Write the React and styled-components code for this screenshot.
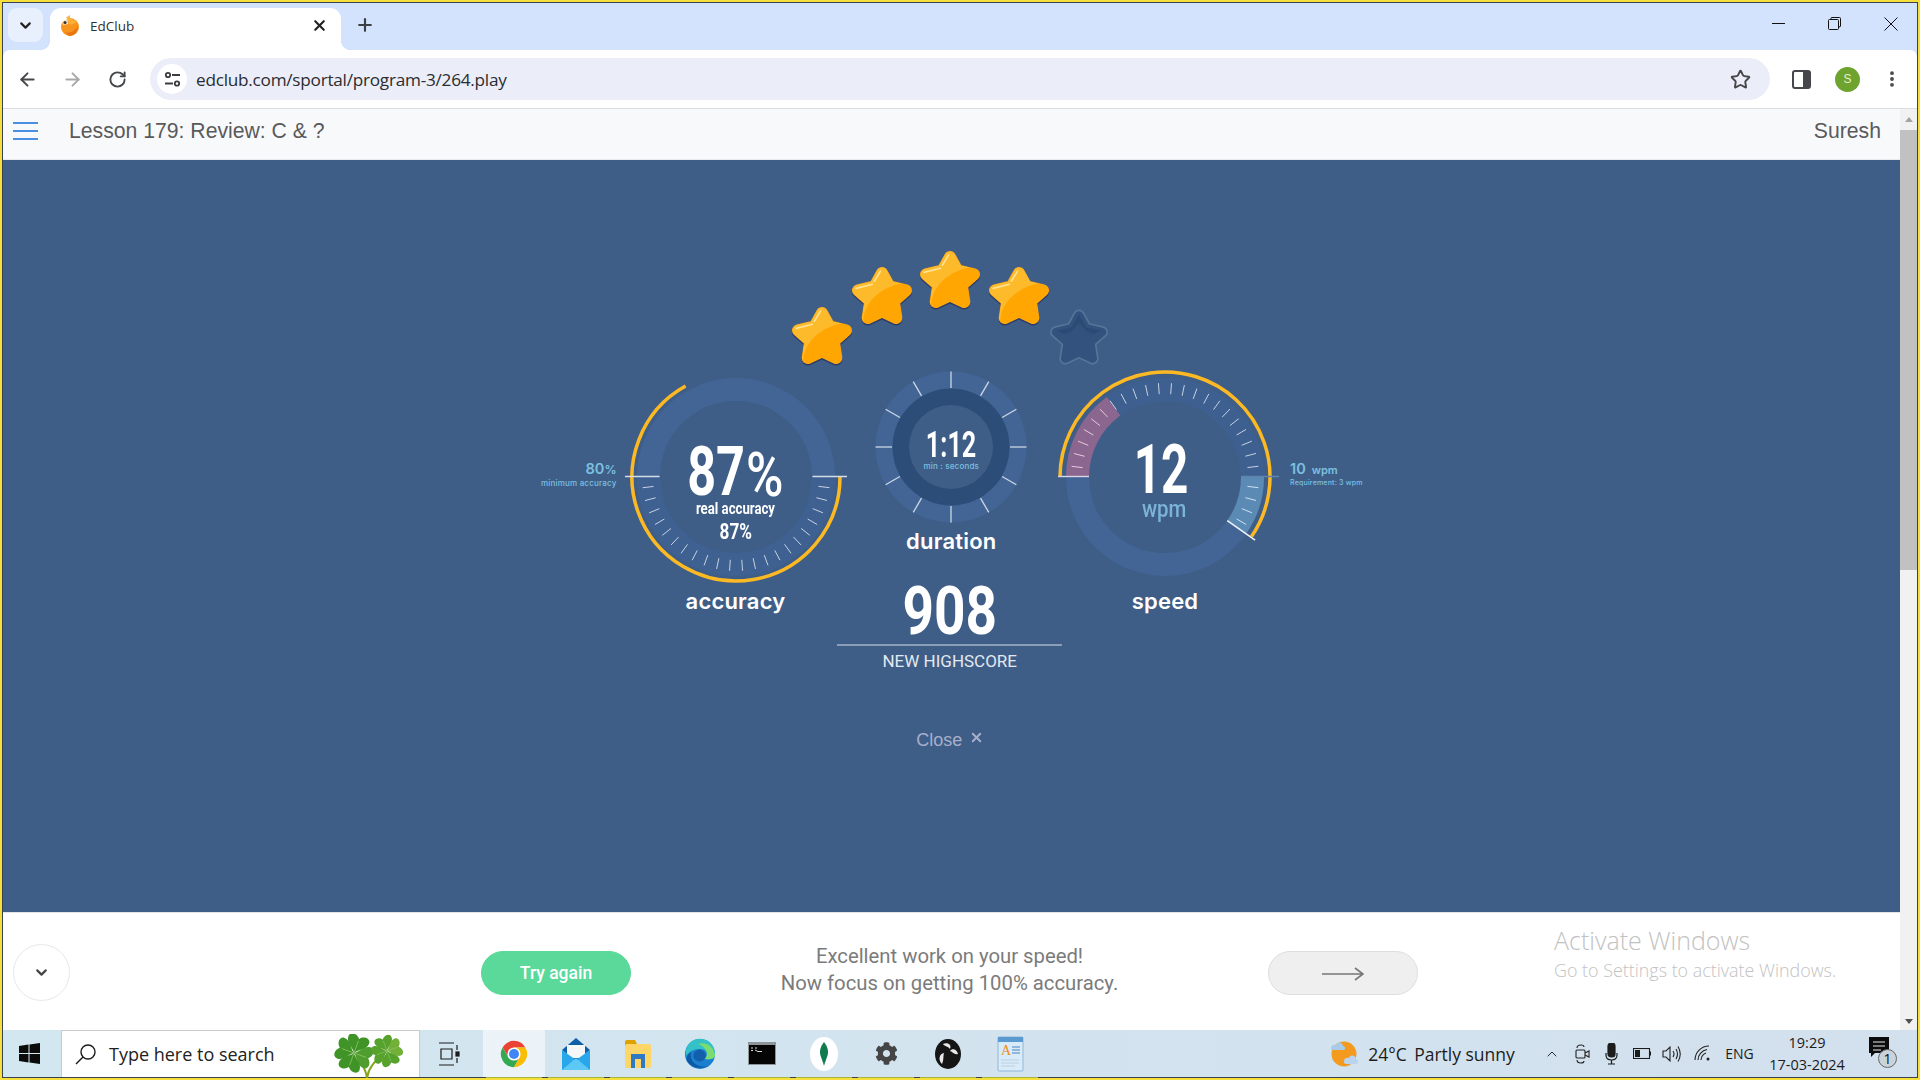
import React, { useId } from 'react';
import styled, { createGlobalStyle } from 'styled-components';
import { ArrowLeft, ArrowRight, RotateCw, Star as StarIcon, X, Plus, ChevronDown, ChevronUp, EllipsisVertical } from 'lucide-react';
import { FaCog } from 'react-icons/fa';

const GlobalStyle = createGlobalStyle`
  html, body { margin: 0; padding: 0; overflow: hidden; background: #fff; }
  * { box-sizing: border-box; }
`;

const BLUE = '#3e5e87';
const BAND = '#426596';
const SKY = '#7cc0e0';
const GOLD = '#fdb924';
const SANS = '"Liberation Sans", Arial, sans-serif';
const UI = '"Open Sans", "Noto Sans", sans-serif';
const NUM = 'Roboto, "Liberation Sans", sans-serif';
const LABEL = 'Inter, "Noto Sans", sans-serif';

/* window chrome */
const Frame = styled.div`
  width: 1920px;
  height: 1080px;
  border: 2px solid #f6df3a;
  overflow: hidden;
`;
const Inner = styled.div`
  height: 100%;
  border: 1px solid #39424e;
  display: flex;
  flex-direction: column;
`;
const TabStrip = styled.div`
  height: 47px;
  flex: none;
  background: #d3e3fd;
  display: flex;
  align-items: flex-end;
  padding-left: 5px;
`;
const TabSearch = styled.div`
  width: 35px;
  height: 34px;
  margin-bottom: 8px;
  border-radius: 9px;
  background: #e9f0fd;
  color: #222;
  display: flex;
  align-items: center;
  justify-content: center;
`;
const Tab = styled.div`
  position: relative;
  width: 291px;
  height: 42px;
  margin-left: 7px;
  border-radius: 11px 11px 0 0;
  background: #fff;
  display: flex;
  align-items: center;
  padding: 0 13px 7px 10px;
  color: #2f3033;
  font: 13.5px ${UI};
  &::before, &::after {
    content: '';
    position: absolute;
    bottom: 0;
    width: 10px;
    height: 10px;
  }
  &::before { left: -10px; background: radial-gradient(circle at 0 0, transparent 10px, #fff 10.5px); }
  &::after { right: -10px; background: radial-gradient(circle at 100% 0, transparent 10px, #fff 10.5px); }
`;
const TabTitle = styled.span`
  flex: 1;
  margin-left: 10px;
`;
const NewTab = styled.div`
  margin: 0 0 8px 14px;
  height: 34px;
  display: flex;
  align-items: center;
  color: #3c3f43;
`;
const WindowControls = styled.div`
  margin-left: auto;
  height: 100%;
  display: flex;
  align-items: center;
  padding: 0 19px 6px 0;
  gap: 43px;
`;
const Toolbar = styled.div`
  height: 59px;
  flex: none;
  background: #d3e3fd;
`;
const ToolbarInner = styled.div`
  height: 100%;
  background: #fff;
  border-bottom: 1px solid #dadce0;
  border-top-right-radius: 7px;
  border-top-left-radius: 7px;
  display: flex;
  align-items: center;
  color: #45474a;
`;
const NavSlot = styled.div`
  width: ${p => p.$w}px;
  flex: none;
  display: flex;
  justify-content: center;
  color: ${p => (p.$dim ? '#a8a9ab' : '#45474a')};
  padding-left: ${p => p.$pad || 0}px;
  padding-right: ${p => p.$padRight || 0}px;
`;
const AddressBar = styled.div`
  flex: 1;
  height: 42px;
  margin-left: 9px;
  border-radius: 21px;
  background: #ebeef8;
  display: flex;
  align-items: center;
  padding: 0 19px 0 7px;
`;
const SiteInfo = styled.div`
  width: 30px;
  height: 30px;
  border-radius: 50%;
  background: #fff;
  display: flex;
  align-items: center;
  justify-content: center;
`;
const Url = styled.span`
  flex: 1;
  margin-left: 9px;
  font: 17.2px ${UI};
  letter-spacing: -0.25px;
  color: #2a2c30;
`;
const Avatar = styled.div`
  width: 25px;
  height: 25px;
  margin-left: -1px;
  border-radius: 50%;
  background: #6ea32d;
  color: #e4efd2;
  font: 12px ${SANS};
  display: flex;
  align-items: center;
  justify-content: center;
`;

/* page */
const Viewport = styled.div`
  flex: 1;
  min-height: 0;
  display: flex;
`;
const Page = styled.div`
  flex: 1;
  min-width: 0;
  display: flex;
  flex-direction: column;
`;
const Scrollbar = styled.div`
  width: 17px;
  flex: none;
  background: #f1f1f1;
  display: flex;
  flex-direction: column;
  align-items: center;
`;
const ScrollArrow = styled.div`
  width: 0;
  height: 0;
  flex: none;
  border-left: 4.5px solid transparent;
  border-right: 4.5px solid transparent;
  ${p => (p.$down ? 'border-top: 5px solid #505050; margin: auto 0 6px;' : 'border-bottom: 5px solid #a3a3a3; margin: 8px 0;')}
`;
const ScrollThumb = styled.div`
  width: 100%;
  height: 440px;
  background: #c1c1c1;
`;
const LessonBar = styled.header`
  height: 51px;
  flex: none;
  background: #f8f9fb;
  display: flex;
  align-items: center;
  padding: 0 19px 6px 10px;
  color: #5a5a5c;
  font: 21.2px ${SANS};
  border-bottom: 1px solid #e8e9ec;
`;
const Burger = styled.div`
  width: 25px;
  height: 18px;
  margin-right: 31px;
  border-top: 2.5px solid #4a90e2;
  border-bottom: 2.5px solid #4a90e2;
  display: flex;
  align-items: center;
  &::before { content: ''; width: 100%; height: 2.5px; background: #4a90e2; }
`;
const LessonTitle = styled.span`
  flex: 1;
`;
const Stage = styled.main`
  flex: 1;
  background: ${BLUE};
  display: flex;
  flex-direction: column;
  align-items: center;
  padding-top: 91px;
`;
const StarRow = styled.div`
  display: flex;
  height: 113px;
  margin-right: 4px;
`;
const StarBox = styled.svg`
  margin-left: ${p => p.$gap}px;
  margin-top: ${p => p.$drop}px;
  overflow: visible;
  flex: none;
`;
const Dials = styled.div`
  display: grid;
  grid-template-columns: 88px 220px 211.5px 216px 92.5px;
  margin-top: 3px;
`;
const DialColumn = styled.div`
  display: flex;
  flex-direction: column;
  align-items: center;
`;
const DialBox = styled.div`
  position: relative;
  width: ${p => p.$size}px;
  height: ${p => p.$size}px;
  margin-top: ${p => p.$top || 0}px;
  flex: none;
  & > svg { display: block; overflow: visible; }
`;
const Readout = styled.div`
  position: absolute;
  inset: 0;
  display: flex;
  flex-direction: column;
  align-items: center;
  padding-top: ${p => p.$top}px;
  color: #fff;
`;
const PercentRow = styled.div`
  display: flex;
  gap: 4px;
`;
const SqueezeBox = styled.div`
  width: ${p => p.$w}px;
  height: ${p => p.$lh}px;
  margin-top: ${p => p.$top || 0}px;
  margin-left: ${p => p.$left || 0}px;
  display: flex;
  justify-content: center;
  white-space: nowrap;
  font: ${p => p.$weight || 700} ${p => p.$size}px/${p => p.$lh}px ${NUM};
  color: ${p => p.$color || '#fff'};
  & > span { display: block; flex: none; transform: scaleX(${p => p.$sx}); }
`;
const Squeeze = ({ children, ...props }) => (
  <SqueezeBox {...props}><span>{children}</span></SqueezeBox>
);
const TinyNote = styled.div`
  font: 500 ${p => p.$size || 8}px/10px ${LABEL};
  letter-spacing: 0.2px;
  color: ${SKY};
  white-space: nowrap;
  margin-top: ${p => p.$top || 0}px;
`;
const DialLabel = styled.div`
  font: 600 22px/26px ${LABEL};
  letter-spacing: 0.2px;
  color: #fff;
  margin-top: ${p => p.$top || 0}px;
`;
const SideNote = styled.div`
  display: flex;
  flex-direction: column;
  align-items: ${p => (p.$right ? 'flex-start' : 'flex-end')};
  padding: 94px ${p => (p.$right ? 0 : 9)}px 0 ${p => (p.$right ? 17 : 0)}px;
  white-space: nowrap;
`;
const SideValue = styled.div`
  font: 600 14.5px/15px ${LABEL};
  color: ${SKY};
  display: flex;
  align-items: baseline;
  gap: ${p => p.$gap || 0}px;
`;
const SideUnit = styled.span`
  font-size: ${p => p.$size}px;
`;
const Score = styled.div`
  width: 225px;
  flex: none;
  margin: 25px 3px 0 0;
  display: flex;
  flex-direction: column;
  align-items: center;
  color: #fff;
`;
const ScoreRule = styled.div`
  width: 100%;
  height: 2px;
  background: rgba(255, 255, 255, 0.4);
`;
const ScoreCaption = styled.div`
  margin-top: 5px;
  font: 17px/20px ${NUM};
  color: #e3e9f1;
`;
const CloseLink = styled.div`
  margin: 59px 2px 0 0;
  display: flex;
  color: #a7afca;
  font: 18px/20px ${SANS};
  gap: 7px;
`;

/* lesson footer */
const Footer = styled.footer`
  position: relative;
  height: 118px;
  flex: none;
  background: #fff;
  display: flex;
  align-items: center;
  padding: 2px 0 0 10px;
  border-top: 1px solid #e2e4e8;
`;
const CollapseButton = styled.div`
  width: 57px;
  height: 57px;
  border-radius: 50%;
  border: 1px solid #e8e8e8;
  display: flex;
  align-items: center;
  justify-content: center;
  color: #444;
  margin-right: 411px;
`;
const PillButton = styled.div`
  width: 150px;
  height: 44px;
  border-radius: 22px;
  flex: none;
  background: ${p => (p.$ghost ? '#efefef' : '#5bd99a')};
  border: 1px solid ${p => (p.$ghost ? '#dedede' : '#5bd99a')};
  color: #fff;
  display: flex;
  align-items: center;
  justify-content: center;
  padding-top: ${p => (p.$ghost ? 3 : 0)}px;
  font: 500 17.5px ${NUM};
`;
const Message = styled.div`
  width: 637px;
  flex: none;
  margin-top: -5px;
  text-align: center;
  color: #7b7b7b;
  font: 20.3px/27px ${NUM};
`;
const Watermark = styled.div`
  position: absolute;
  left: 1551px;
  top: 9px;
  color: #c2c2c2;
  font: 300 17.9px/24px ${UI};
`;
const WatermarkTitle = styled.div`
  font-size: 25px;
  line-height: 36px;
`;

/* taskbar */
const Taskbar = styled.div`
  height: 47px;
  flex: none;
  background: linear-gradient(90deg, #d2e7f0, #d3e0ee);
  display: flex;
  align-items: center;
`;
const StartButton = styled.div`
  width: 58px;
  height: 100%;
  display: flex;
  align-items: center;
  justify-content: center;
  padding-right: 6px;
`;
const SearchBox = styled.div`
  position: relative;
  width: 359px;
  height: 100%;
  background: #fff;
  border: 1px solid #c9cccf;
  border-bottom: 0;
  display: flex;
  align-items: center;
  padding-left: 13px;
  color: #222;
  font: 18px ${UI};
  gap: 13px;
`;
const Clover = styled.svg`
  position: absolute;
  left: 268px;
  top: 3px;
`;
const TaskSlot = styled.div`
  position: relative;
  width: ${p => p.$w || 62}px;
  height: 100%;
  flex: none;
  display: flex;
  align-items: center;
  justify-content: center;
  padding-right: ${p => p.$padRight || 0}px;
  background: ${p => (p.$active ? 'rgba(255, 255, 255, 0.55)' : 'transparent')};
  ${p => p.$open && `
    &::after {
      content: '';
      position: absolute;
      left: 3px;
      right: 3px;
      bottom: -3px;
      height: 3px;
      background: #a7b53a;
    }
  `}
`;
const Tray = styled.div`
  margin-left: auto;
  height: 100%;
  display: flex;
  align-items: center;
  padding-right: 20px;
  color: #1c1c1c;
  font: 17.5px ${UI};
  white-space: nowrap;
`;
const TrayItem = styled.div`
  width: ${p => p.$w}px;
  margin-left: ${p => p.$ml || 0}px;
  flex: none;
  display: flex;
  align-items: center;
  justify-content: center;
  font-size: ${p => p.$size || 17.5}px;
`;
const Clock = styled.div`
  width: 78px;
  margin-left: 15px;
  flex: none;
  text-align: center;
  font: 14.5px/22px ${UI};
`;
const NoteBadge = styled.div`
  position: absolute;
  left: 9px;
  top: 12px;
  width: 19px;
  height: 19px;
  border-radius: 50%;
  border: 1px solid #666;
  background: #c9d3da;
  color: #111;
  font: 14px/17px ${UI};
  text-align: center;
`;
const NoteIcon = styled.div`
  position: relative;
  width: 28px;
  height: 34px;
  margin-left: 23px;
  flex: none;
`;

const STAR_PATH = 'M29.5 6 L36.7 19 L53 23 L41 33.5 L43.5 50 L29.5 43.5 L15.5 50 L18 33.5 L6 23 L22.3 19 Z';

const Star = ({ lit, gap, drop }) => {
  const id = useId();
  if (!lit) {
    return (
      <StarBox width="58" height="56" viewBox="0 0 59 56" $gap={gap} $drop={drop}>
        <path d={STAR_PATH} fill="#587399" stroke="#587399" strokeWidth="12" strokeLinejoin="round" />
        <path d={STAR_PATH} fill="#33527e" stroke="#33527e" strokeWidth="8.5" strokeLinejoin="round" />
        <path d="M7 22 L22 18 L29.5 5 L37 18 L52 22 L44 25 L37 22 L29.5 14 L22 22 L15 25 Z" fill="#2b4870" opacity="0.75" />
      </StarBox>
    );
  }
  return (
    <StarBox width="60" height="57" viewBox="0 0 59 56" $gap={gap} $drop={drop}>
      <defs>
        <mask id={id}>
          <path d={STAR_PATH} fill="#fff" stroke="#fff" strokeWidth="11" strokeLinejoin="round" />
        </mask>
      </defs>
      <path d={STAR_PATH} transform="translate(0 1.6)" fill="#2c3c66" stroke="#2c3c66" strokeWidth="12" strokeLinejoin="round" />
      <path d={STAR_PATH} fill="#f8a51b" stroke="#f8a51b" strokeWidth="12" strokeLinejoin="round" />
      <g mask={`url(#${id})`}>
        <rect x="0" y="0" width="60" height="56" fill="#fdbb2c" />
        <ellipse cx="60" cy="54" rx="49" ry="39" fill="#ffa602" />
        <path d="M22 14 L28 4 M4 21 L20 17" stroke="#ffe394" strokeWidth="1.6" strokeLinecap="round" />
      </g>
    </StarBox>
  );
};

const polar = (c, r, deg) => {
  const a = (deg * Math.PI) / 180;
  return [c + r * Math.cos(a), c + r * Math.sin(a)];
};
const arc = (c, r, from, to) => {
  const [x0, y0] = polar(c, r, from);
  const [x1, y1] = polar(c, r, to);
  return `M${x0} ${y0} A${r} ${r} 0 ${to - from > 180 ? 1 : 0} 1 ${x1} ${y1}`;
};
const Tick = ({ c, deg, r0, r1, color = '#dfe6f0', width = 1 }) => {
  const [x0, y0] = polar(c, r0, deg);
  const [x1, y1] = polar(c, r1, deg);
  return <line x1={x0} y1={y0} x2={x1} y2={y1} stroke={color} strokeWidth={width} />;
};
const TICKS = Array.from({ length: 22 }, (_, i) => 6.5 + 7.95 * i);

const AccuracyDial = () => (
  <svg width="220" height="220" viewBox="0 0 220 220">
    <circle cx="110" cy="110" r="87.5" fill="none" stroke={BAND} strokeWidth="23" />
    <path d={arc(110, 87.5, 0, 180)} fill="none" stroke="#3f6191" strokeWidth="23" />
    {TICKS.map(d => <Tick key={d} c={110} deg={d} r0={83} r1={94} color="#c7d2e2" />)}
    <path d={arc(110, 104, 0, 241)} fill="none" stroke={GOLD} strokeWidth="3.5" />
    <line x1="-1" y1="109.5" x2="33.5" y2="109.5" stroke="#d5dde8" strokeWidth="1.4" />
    <line x1="186.5" y1="109.5" x2="221" y2="109.5" stroke="#d5dde8" strokeWidth="1.4" />
  </svg>
);

const DurationDial = () => (
  <svg width="152" height="152" viewBox="0 0 152 152">
    <circle cx="76" cy="76" r="75.5" fill={BAND} />
    <circle cx="76" cy="76" r="58.5" fill="#2c4d77" />
    <circle cx="76" cy="76" r="42" fill={BLUE} />
    {Array.from({ length: 12 }, (_, i) => i * 30).map(d => (
      <Tick key={d} c={76} deg={d} r0={59} r1={75.5} color="#cdd7e4" width={1.3} />
    ))}
  </svg>
);

const SpeedDial = () => (
  <svg width="216" height="216" viewBox="0 0 216 216">
    <g transform="translate(0 2)">
      <circle cx="108" cy="108" r="87.5" fill="none" stroke={BAND} strokeWidth="23" />
      <path d={arc(108, 87.5, 180, 360)} fill="none" stroke="#3e6090" strokeWidth="23" />
      <path d={arc(108, 87.5, 180, 234)} fill="none" stroke="#8b6790" strokeWidth="23" />
      <path d={arc(108, 87.5, 0, 35)} fill="none" stroke="#5b8bb5" strokeWidth="23" />
      {TICKS.map(d => (
        <Tick key={d} c={108} deg={180 + d} r0={83} r1={94} color={d < 54 ? '#e8c9df' : '#c7d2e2'} />
      ))}
      {TICKS.slice(0, 4).map(d => <Tick key={d} c={108} deg={d} r0={83} r1={94} color="#cfe0ee" />)}
      <path d={arc(108, 105, 180, 394.6)} fill="none" stroke={GOLD} strokeWidth="3.5" />
      <line x1="1" y1="107.5" x2="32" y2="107.5" stroke="#dcd6e4" strokeWidth="1.4" />
      <line x1="184" y1="107.5" x2="222" y2="107.5" stroke="#5d84ad" strokeWidth="1.4" />
      <Tick c={108} deg={35} r0={76} r1={110} color="#f2f5f9" width={1.5} />
    </g>
  </svg>
);

const Favicon = () => (
  <svg width="20" height="22" viewBox="0 0 20 22">
    <circle cx="10" cy="12" r="9" fill="#f7941d" />
    <path d="M6 3 C8 1 9 1 10 0 C9 4 13 5 17 6 C15 9 11 10 9 9 Z" fill="#fbb03b" />
    <path d="M2 5 L7 3 L8 9 L3 10 Z" fill="#fff" opacity="0.75" />
    <circle cx="5" cy="7.5" r="1.6" fill="#333" />
    <path d="M5 17 C10 19 15 16 18 11 C18 17 14 21 9 21 Z" fill="#e87311" />
  </svg>
);

const ChromeLogo = () => (
  <svg width="30" height="30" viewBox="0 0 48 48">
    <path d="M24 3 A21 21 0 0 1 42.2 13.5 L24 13.5 Z" fill="#ea4335" />
    <path d="M24 3 A21 21 0 0 0 5.8 13.5 L14.5 28.5 L24 13.5 Z" fill="#ea4335" />
    <path d="M5.8 13.5 A21 21 0 0 0 24 45 L33 29 L14.9 29 Z" fill="#34a853" />
    <path d="M42.2 13.5 A21 21 0 0 1 24 45 L33.5 28 L24 13.5 Z" fill="#fbbc04" />
    <circle cx="24" cy="24" r="10.5" fill="#fff" />
    <circle cx="24" cy="24" r="8" fill="#4285f4" />
  </svg>
);

const MailIcon = () => (
  <svg width="30" height="34" viewBox="0 0 30 34">
    <path d="M1 13 L15 1 L29 13 L15 24 Z" fill="#0f5fa8" />
    <rect x="6" y="8" width="18" height="13" fill="#f4f6f8" />
    <path d="M1 13 L15 23 L29 13 V33 H1 Z" fill="#28a8ea" />
    <path d="M1 33 L15 21 L29 33 Z" fill="#5cc8f5" />
  </svg>
);

const FolderIcon = () => (
  <svg width="28" height="30" viewBox="0 0 28 30">
    <path d="M1 3 Q1 1 3 1 H11 L13 5 V8 H1 Z" fill="#e0a100" />
    <rect x="1" y="5" width="26" height="24" rx="2" fill="#fdd667" />
    <path d="M7 15 H21 V29 H17 V20 H11 V29 H7 Z" fill="#2f78c4" />
  </svg>
);

const EdgeIcon = () => (
  <svg width="32" height="32" viewBox="0 0 32 32">
    <circle cx="16" cy="16" r="15" fill="#1b7fd0" />
    <path d="M2 12 C4 3 12 0 18 1 C27 2 31 9 31 17 C31 21 26 22 21 21 C25 17 23 11 16 11 C9 11 5 14 2 18 Z" fill="#35c1c8" />
    <path d="M14 6 C22 3 30 9 31 17 C31 21 26 22 21 21 C25 17 23 9 14 6 Z" fill="#7bdc6f" />
    <path d="M7 14 C5 22 12 31 24 28 C18 31 8 31 3 23 C2 19 4 16 7 14 Z" fill="#0c59a4" />
    <circle cx="15.5" cy="17.5" r="6" fill="#0e4e96" opacity="0.65" />
  </svg>
);

const TerminalIcon = () => (
  <svg width="28" height="23" viewBox="0 0 28 23">
    <rect width="28" height="23" fill="#8f9498" />
    <rect x="1" y="3" width="26" height="19" fill="#050505" />
    <path d="M3 6 H5 M7 6 H9 M3 8.5 H5 M7 8 L10 9.5 H14" stroke="#d9d9d9" strokeWidth="1" />
  </svg>
);

const MongoIcon = () => (
  <svg width="28" height="34" viewBox="0 0 28 34">
    <ellipse cx="14" cy="17" rx="14" ry="17" fill="#fff" />
    <path d="M14 5 C18 10 19 15 17 20 C16 23 15 25 14 29 C13 25 12 23 11 20 C9 15 10 10 14 5 Z" fill="#0f7a4d" />
  </svg>
);

const ObsIcon = () => (
  <svg width="26" height="30" viewBox="0 0 26 30">
    <ellipse cx="13" cy="15" rx="13" ry="15" fill="#151515" />
    <path d="M8 5 C12 3 17 5 15 10 C13 7 9 7 8 5 Z M23 15 C22 10 17 9 15 12 C18 13 19 16 23 15 Z M7 25 C3 21 4 15 9 14 C8 17 9 21 7 25 Z" fill="#e9e9e9" />
  </svg>
);

const WordPadIcon = () => (
  <svg width="27" height="36" viewBox="0 0 27 36">
    <rect x="1" y="1" width="25" height="34" rx="1" fill="#d9ebf8" stroke="#8fb7d8" />
    <rect x="1" y="1" width="25" height="5" fill="#5b9ad0" />
    <text x="4" y="19" fontSize="14" fontFamily="Liberation Serif, serif" fill="#f08a1d">A</text>
    <path d="M15 11 H23 M15 14 H23 M15 17 H23" stroke="#4b86c0" strokeWidth="1.2" />
    <path d="M4 24 H22 M4 27 H22 M4 30 H18" stroke="#b8cfe3" strokeWidth="1" />
  </svg>
);

const Leaf = ({ turn, fill }) => (
  <g transform={`rotate(${turn})`}>
    <path d="M0 0 C-3 -5 -11 -7 -11 -14 C-11 -19 -4 -20 0 -15 C4 -20 11 -19 11 -14 C11 -7 3 -5 0 0 Z" fill={fill} />
    <path d="M0 -1 V-13" stroke="#8fc860" strokeWidth="0.7" />
  </g>
);

const CloverArt = () => (
  <Clover width="78" height="44" viewBox="0 0 78 44">
    <path d="M37 44 C36 36 33 30 26 22 M37 44 C38 36 42 28 56 18" stroke="#86a51f" strokeWidth="2" fill="none" />
    <g transform="translate(24 19)">
      {[20, 110, 200, 290].map((t, i) => <Leaf key={t} turn={t} fill={i === 1 ? '#4f9d2e' : '#3f9327'} />)}
    </g>
    <g transform="translate(57 17) scale(0.82)">
      {[-20, 70, 160, 250].map((t, i) => <Leaf key={t} turn={t} fill={i === 1 ? '#72b038' : '#56a22d'} />)}
    </g>
  </Clover>
);

const WeatherIcon = () => (
  <svg width="29" height="27" viewBox="0 0 29 27">
    <circle cx="14" cy="14" r="12.5" fill="#f39a1f" />
    <path d="M1 8 C1 5 4 4 6 5 C7 1 13 2 13 6 C15 6 16 9 14 10 H3 C1 10 1 9 1 8 Z" fill="#a9cbe8" />
    <path d="M14 21 C14 18 17 17 19 18 C20 14 26 15 26 19 C28 19 29 22 27 24 H16 C14 24 14 22 14 21 Z" fill="#b9d4ec" />
  </svg>
);

const App = () => (
  <>
    <GlobalStyle />
    <Frame>
      <Inner>
        <TabStrip>
          <TabSearch><ChevronDown size={17} strokeWidth={3} /></TabSearch>
          <Tab>
            <Favicon />
            <TabTitle>EdClub</TabTitle>
            <X size={17} strokeWidth={3} color="#222" />
          </Tab>
          <NewTab><Plus size={20} strokeWidth={2.6} /></NewTab>
          <WindowControls>
            <svg width="13" height="13" viewBox="0 0 13 13"><path d="M0 6.5 H13" stroke="#111" strokeWidth="1" /></svg>
            <svg width="13" height="13" viewBox="0 0 13 13" fill="none" stroke="#111"><rect x="0.5" y="2.5" width="10" height="10" rx="1" /><path d="M3 2.5 V1.5 Q3 0.5 4 0.5 H11.5 Q12.5 0.5 12.5 1.5 V9 Q12.5 10 11 10" /></svg>
            <svg width="14" height="14" viewBox="0 0 14 14"><path d="M0.5 0.5 L13.5 13.5 M13.5 0.5 L0.5 13.5" stroke="#111" strokeWidth="1" /></svg>
          </WindowControls>
        </TabStrip>
        <Toolbar>
          <ToolbarInner>
            <NavSlot $w={48}><ArrowLeft size={21} strokeWidth={2.2} /></NavSlot>
            <NavSlot $w={45} $dim $padRight={2}><ArrowRight size={21} strokeWidth={2.2} /></NavSlot>
            <NavSlot $w={45} $padRight={2}><RotateCw size={19} strokeWidth={2.4} /></NavSlot>
            <AddressBar>
              <SiteInfo>
                <svg width="17" height="17" viewBox="0 0 17 17" fill="none" stroke="#3b3d40" strokeWidth="1.8">
                  <circle cx="4" cy="4" r="2.2" /><path d="M8 4 H16 M1 12.5 H9" /><circle cx="13" cy="12.5" r="2.2" />
                </svg>
              </SiteInfo>
              <Url>edclub.com/sportal/program-3/264.play</Url>
              <StarIcon size={21} strokeWidth={2.2} />
            </AddressBar>
            <NavSlot $w={66} $padRight={3}>
              <svg width="19" height="19" viewBox="0 0 19 19"><rect x="1" y="1" width="17" height="17" rx="2" fill="#fff" stroke="#45474a" strokeWidth="2" /><rect x="11" y="1" width="7" height="17" fill="#45474a" /></svg>
            </NavSlot>
            <Avatar>S</Avatar>
            <NavSlot $w={57} $pad={6}><EllipsisVertical size={20} strokeWidth={2.6} /></NavSlot>
          </ToolbarInner>
        </Toolbar>
        <Viewport>
          <Page>
            <LessonBar>
              <Burger />
              <LessonTitle>Lesson 179: Review: C &amp; ?</LessonTitle>
              <span>Suresh</span>
            </LessonBar>
            <Stage>
              <StarRow>
                <Star lit gap={0} drop={56} />
                <Star lit gap={0} drop={16} />
                <Star lit gap={8} drop={0} />
                <Star lit gap={9} drop={16} />
                <Star gap={1} drop={58} />
              </StarRow>
              <Dials>
                <SideNote>
                  <SideValue>80<SideUnit $size={12}>%</SideUnit></SideValue>
                  <TinyNote $top={1}>minimum accuracy</TinyNote>
                </SideNote>
                <DialColumn>
                  <DialBox $size={220}>
                    <AccuracyDial />
                    <Readout $top={71}>
                      <PercentRow>
                        <Squeeze $w={54} $sx={0.74} $size={68} $lh={68}>87</Squeeze>
                        <Squeeze $w={34} $sx={0.82} $size={62} $lh={68} $top={3} $weight={500}>%</Squeeze>
                      </PercentRow>
                      <Squeeze $w={83} $sx={0.8} $size={16.5} $lh={16} $top={-8}>real accuracy</Squeeze>
                      <Squeeze $w={34} $sx={0.78} $size={22} $lh={22} $top={4}>87%</Squeeze>
                    </Readout>
                  </DialBox>
                  <DialLabel $top={1}>accuracy</DialLabel>
                </DialColumn>
                <DialColumn>
                  <DialBox $size={152} $top={4}>
                    <DurationDial />
                    <Readout $top={56}>
                      <Squeeze $w={45} $sx={0.68} $size={37} $lh={36}>1:12</Squeeze>
                      <TinyNote $top={-2}>min : seconds</TinyNote>
                    </Readout>
                  </DialBox>
                  <DialLabel $top={5}>duration</DialLabel>
                  <Score>
                    <Squeeze $w={90} $sx={0.82} $size={67} $lh={65}>908</Squeeze>
                    <ScoreRule />
                    <ScoreCaption>NEW HIGHSCORE</ScoreCaption>
                  </Score>
                  <CloseLink>
                    Close
                    <X size={15} strokeWidth={3} />
                  </CloseLink>
                </DialColumn>
                <DialColumn>
                  <DialBox $size={216}>
                    <SpeedDial />
                    <Readout $top={69}>
                      <Squeeze $w={46} $sx={0.7} $size={68} $lh={68} $left={-7}>12</Squeeze>
                      <Squeeze $w={44} $sx={0.85} $size={24} $lh={24} $top={-7} $left={-2} $weight={500} $color="#7cb4d8">wpm</Squeeze>
                    </Readout>
                  </DialBox>
                  <DialLabel $top={5}>speed</DialLabel>
                </DialColumn>
                <SideNote $right>
                  <SideValue $gap={6}>10<SideUnit $size={11}>wpm</SideUnit></SideValue>
                  <TinyNote $size={7}>Requirement: 3 wpm</TinyNote>
                </SideNote>
              </Dials>
            </Stage>
            <Footer>
              <CollapseButton><ChevronDown size={17} strokeWidth={3} /></CollapseButton>
              <PillButton>Try again</PillButton>
              <Message>
                Excellent work on your speed!<br />
                Now focus on getting 100% accuracy.
              </Message>
              <PillButton $ghost>
                <svg width="42" height="14" viewBox="0 0 42 14" fill="none" stroke="#777" strokeWidth="1.6"><path d="M0 7 H41 M33 1 L41 7 L33 13" /></svg>
              </PillButton>
              <Watermark>
                <WatermarkTitle>Activate Windows</WatermarkTitle>
                Go to Settings to activate Windows.
              </Watermark>
            </Footer>
          </Page>
          <Scrollbar>
            <ScrollArrow />
            <ScrollThumb />
            <ScrollArrow $down />
          </Scrollbar>
        </Viewport>
        <Taskbar>
          <StartButton>
            <svg width="21" height="21" viewBox="0 0 21 21" fill="#0b0b0b"><path d="M0 3 L9.5 1.6 V10 H0 Z M10.5 1.5 L21 0 V10 H10.5 Z M0 11 H9.5 V19.4 L0 18 Z M10.5 11 H21 V21 L10.5 19.5 Z" /></svg>
          </StartButton>
          <SearchBox>
            <svg width="21" height="21" viewBox="0 0 21 21" fill="none" stroke="#1c1c1c" strokeWidth="1.4"><circle cx="13" cy="8" r="7" /><path d="M8 13 L1 20" /></svg>
            Type here to search
            <CloverArt />
          </SearchBox>
          <TaskSlot $w={63} $padRight={4}>
            <svg width="21" height="24" viewBox="0 0 21 24" fill="none" stroke="#1c1c1c" strokeWidth="1.2"><path d="M0 1 H15 M0 23 H15 M2 7 H13 V17 H2 Z" /><path d="M18 3 V8 M18 16 V21" /><rect x="17" y="10" width="3" height="4" fill="#1c1c1c" /></svg>
          </TaskSlot>
          <TaskSlot $active $open><ChromeLogo /></TaskSlot>
          <TaskSlot $open><MailIcon /></TaskSlot>
          <TaskSlot $open><FolderIcon /></TaskSlot>
          <TaskSlot $open><EdgeIcon /></TaskSlot>
          <TaskSlot $open><TerminalIcon /></TaskSlot>
          <TaskSlot $open><MongoIcon /></TaskSlot>
          <TaskSlot $open><FaCog size={23} color="#454545" /></TaskSlot>
          <TaskSlot $open><ObsIcon /></TaskSlot>
          <TaskSlot $open><WordPadIcon /></TaskSlot>
          <Tray>
            <TrayItem $w={29}><WeatherIcon /></TrayItem>
            <TrayItem $w={37} $ml={10}>24°C</TrayItem>
            <TrayItem $w={95} $ml={11}>Partly sunny</TrayItem>
            <TrayItem $w={16} $ml={32}><ChevronUp size={24} strokeWidth={1.4} /></TrayItem>
            <TrayItem $w={15} $ml={15}>
              <svg width="15" height="22" viewBox="0 0 15 22" fill="none" stroke="#222" strokeWidth="1.1"><rect x="1" y="7" width="9" height="8" rx="1" /><path d="M10 10 L14 8 V14 L10 12 M2 5 Q2 2 6 2 Q9 2 9 4 M2 17 Q2 20 6 20 Q9 20 9 18" /></svg>
            </TrayItem>
            <TrayItem $w={13} $ml={15}>
              <svg width="13" height="22" viewBox="0 0 13 22" fill="none" stroke="#1c1c1c" strokeWidth="1.2"><rect x="3" y="0" width="7" height="14" rx="3" fill="#1c1c1c" /><path d="M1 10 V12 Q1 17 6.5 17 Q12 17 12 12 V10 M6.5 17 V21 M3 21 H10" /></svg>
            </TrayItem>
            <TrayItem $w={18} $ml={15}>
              <svg width="18" height="11" viewBox="0 0 18 11" fill="none" stroke="#1c1c1c" strokeWidth="1.1"><rect x="0.5" y="0.5" width="16" height="10" /><rect x="2" y="2" width="5" height="7" fill="#1c1c1c" stroke="none" /><path d="M17.5 3.5 V7.5" /></svg>
            </TrayItem>
            <TrayItem $w={19} $ml={11}>
              <svg width="19" height="18" viewBox="0 0 19 18" fill="none" stroke="#222" strokeWidth="1.1"><path d="M1 6 H4 L8 2 V16 L4 12 H1 Z M11 6 Q13 9 11 12 M14 4 Q17 9 14 14 M16 1.5 Q20.5 9 16 16.5" /></svg>
            </TrayItem>
            <TrayItem $w={17} $ml={13}>
              <svg width="17" height="17" viewBox="0 0 17 17" fill="none" stroke="#222" strokeWidth="1.1"><path d="M1 15 A14 14 0 0 1 15 1 M4 15 A11 11 0 0 1 13 4.5 M7 15 A8 8 0 0 1 12 8" /><circle cx="14" cy="14" r="1.5" fill="#222" stroke="none" /></svg>
            </TrayItem>
            <TrayItem $w={27} $ml={15} $size={14}>ENG</TrayItem>
            <Clock>19:29<br />17-03-2024</Clock>
            <NoteIcon>
              <svg width="20" height="21" viewBox="0 0 20 21"><path d="M0 0 H20 V16 H6 L2 20 V16 H0 Z" fill="#0c0c0c" /><path d="M4 5 H16 M4 9 H16 M4 13 H12" stroke="#e8e8e8" strokeWidth="1" /></svg>
              <NoteBadge>1</NoteBadge>
            </NoteIcon>
          </Tray>
        </Taskbar>
      </Inner>
    </Frame>
  </>
);

export default App;
